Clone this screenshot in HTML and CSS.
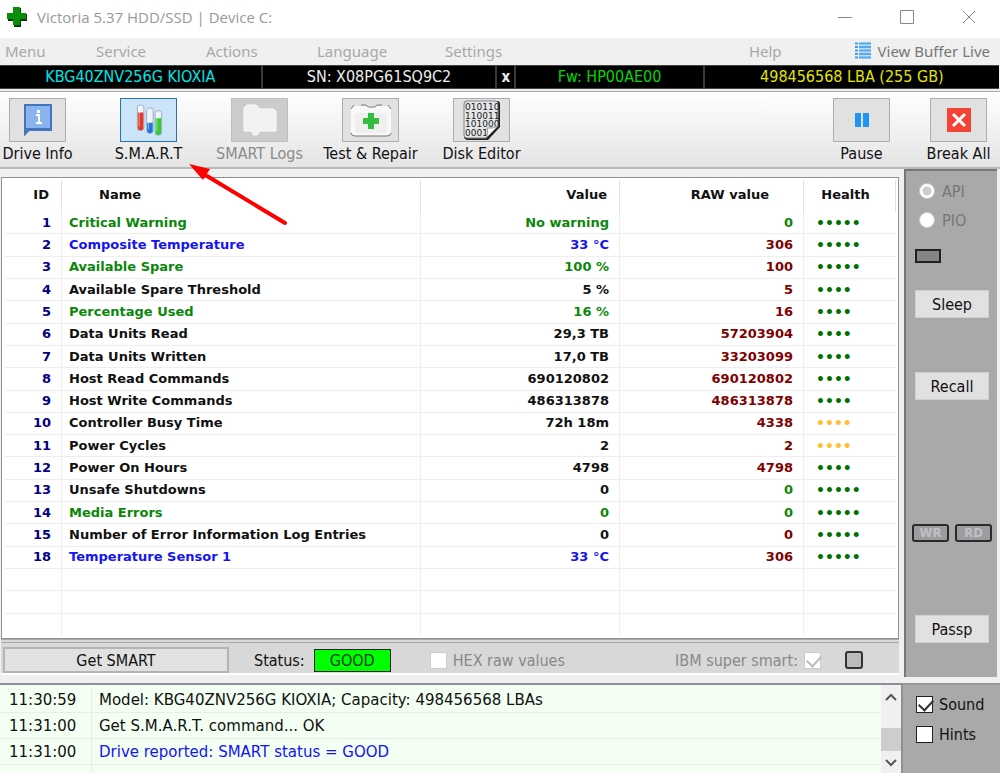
FILE: index.html
```html
<!DOCTYPE html>
<html lang="en">
<head>
  <meta charset="UTF-8">
  <meta name="viewport" content="width=device-width, initial-scale=1.0">
  <title>Victoria 5.37 HDD/SSD</title>
  <link rel="stylesheet" href="styles.css">
</head>
<body>
  <header class="titlebar">
    <svg class="app-icon" width="20" height="20" viewBox="0 0 20 20">
      <path d="M7 1h7v6h6v7h-6v6H7v-6H1V7h6z" fill="#0a3d0a"/>
      <path d="M6 0h7v6h6v6h-6v6H6v-6H0V6h6z" fill="#0b8f0b"/>
    </svg>
    <h1>Victoria 5.37 HDD/SSD | Device C:</h1>
    <div class="window-buttons">
      <button aria-label="Minimize"><svg width="14" height="14" viewBox="0 0 14 14"><path d="M0 7.5h14"/></svg></button>
      <button aria-label="Maximize"><svg width="14" height="14" viewBox="0 0 14 14"><path d="M.5 .5h13v13H.5z"/></svg></button>
      <button aria-label="Close"><svg width="14" height="14" viewBox="0 0 14 14"><path d="M1 1l12 12M13 1L1 13"/></svg></button>
    </div>
  </header>

  <nav class="menu">
    <button>Menu</button>
    <button>Service</button>
    <button>Actions</button>
    <button>Language</button>
    <button>Settings</button>
    <button>Help</button>
    <button class="buffer">
      <svg width="16" height="17" viewBox="0 0 16 17">
        <path d="M0 1.500h3M0 5h3M0 8.500h3M0 12h3M0 15.500h3M4 1.500h12M4 5h12M4 8.500h12M4 12h12M4 15.500h12" stroke="#3d9be9" stroke-width="2"/>
        <path d="M4 0h12v17H4z" fill="#7cc0f8" opacity=".4"/>
      </svg>
      View Buffer Live
    </button>
  </nav>

  <div class="drive">
    <span class="model">KBG40ZNV256G KIOXIA</span>
    <span class="serial">SN: X08PG61SQ9C2</span>
    <button class="clear">x</button>
    <span class="firmware">Fw: HP00AE00</span>
    <span class="size">498456568 LBA (255 GB)</span>
  </div>

  <div class="toolbar">
    <button class="tool">
      <span class="tool-icon">
        <svg width="28" height="32" viewBox="0 0 28 32">
          <path d="M1 1h26v25H5l-4 4z" fill="#8ab4f0" stroke="#4373b8" stroke-width="2"/>
          <path d="M2 29V25h25" fill="none" stroke="#4373b8" stroke-width="2"/>
          <path d="M12 10h4v8h2v2h-6v-2h2v-6h-2zM13 6h3v3h-3z" fill="#fff"/>
        </svg>
      </span>
      Drive Info
    </button>
    <button class="tool active">
      <span class="tool-icon">
        <svg width="28" height="32" viewBox="0 0 30 34">
          <g fill="#eef3fa" stroke="#98a9c8">
            <path d="M2.500 3v22a3.500 3.500 0 0 0 7 0V3a3.500 2 0 0 0-7 0z"/>
            <path d="M12.500 6v22a3.500 3.500 0 0 0 7 0V6a3.500 2 0 0 0-7 0z"/>
            <path d="M21.500 9v21a3.500 3.500 0 0 0 7 0V9a3.500 2 0 0 0-7 0z"/>
          </g>
          <path d="M3 9h6v16a3 3 0 0 1-6 0z" fill="#e23a28"/>
          <path d="M13 20h6v8a3 3 0 0 1-6 0z" fill="#1c78dc"/>
          <path d="M22 15h6v15a3 3 0 0 1-6 0z" fill="#35c935"/>
          <path d="M4.500 4v20M14.500 7v20M23.500 10v19" stroke="#fff" opacity=".5"/>
        </svg>
      </span>
      S.M.A.R.T
    </button>
    <button class="tool" disabled>
      <span class="tool-icon">
        <svg width="34" height="32" viewBox="0 0 34 32">
          <path d="M1 8V4l3-3h9l4 4h13l3 2v20H17l-3 4h-4l-1-4H1z" fill="#f1f1f1" stroke="#fafafa"/>
        </svg>
      </span>
      SMART Logs
    </button>
    <button class="tool">
      <span class="tool-icon">
        <svg width="42" height="36" viewBox="0 0 42 36">
          <rect x="1" y="4" width="40" height="30" rx="3" fill="#f8f8f8"/>
          <rect x="5" y="11" width="32" height="20" rx="2" fill="#efefef"/>
          <path d="M1 7l3-4M41 7l-3-4M11 3h5l2 2h7l2-2h5M1 31q0 3 4 3h32q4 0 4-3" fill="none" stroke="#777"/>
          <path d="M18 11h6v5h5v6h-5v5h-6v-5h-5v-6h5z" fill="#32bd40"/>
        </svg>
      </span>
      Test &amp; Repair
    </button>
    <button class="tool">
      <span class="tool-icon">
        <svg width="40" height="42" viewBox="0 0 40 42">
          <path d="M5 2h30q3 0 3 3v23L26 41H6q-4 0-4-4V5q0-3 3-3z" fill="#222"/>
          <path d="M5 2h28q3 0 3 3v22L24 39H5q-3 0-3-3V5q0-3 3-3z" fill="#e4e6e7" stroke="#7c858c"/>
          <g class="bits">
            <text x="3" y="11">010110</text>
            <text x="3" y="20">110011</text>
            <text x="3" y="28">101000</text>
            <text x="3" y="37">0001</text>
          </g>
          <path d="M24 39q3-6 1-10 6 1 11-2z" fill="#fff" stroke="#999"/>
        </svg>
      </span>
      Disk Editor
    </button>
    <div class="tools-right">
      <button class="tool">
        <span class="tool-icon">
          <svg width="14" height="14" viewBox="0 0 14 14"><path d="M0 0h6v14H0zM8 0h6v14H8z" fill="#1e95f4"/></svg>
        </span>
        Pause
      </button>
      <button class="tool">
        <span class="tool-icon">
          <svg width="24" height="24" viewBox="0 0 24 24">
            <path d="M0 0h24v24H0z" fill="#f44336"/>
            <path d="M6 6l12 12M18 6L6 18" stroke="#fff" stroke-width="3"/>
          </svg>
        </span>
        Break All
      </button>
    </div>
  </div>

  <main class="workspace">
    <section class="smart">
      <div class="smart-frame">
        <table>
          <colgroup>
            <col class="col-id"><col><col class="col-value"><col class="col-raw"><col class="col-health">
          </colgroup>
          <thead>
            <tr><th>ID</th><th>Name</th><th>Value</th><th>RAW value</th><th>Health</th></tr>
          </thead>
          <tbody>
            <tr class="good"><td>1</td><td>Critical Warning</td><td>No warning</td><td class="zero">0</td><td>•••••</td></tr>
            <tr class="info"><td>2</td><td>Composite Temperature</td><td>33 °C</td><td>306</td><td>•••••</td></tr>
            <tr class="good"><td>3</td><td>Available Spare</td><td>100 %</td><td>100</td><td>•••••</td></tr>
            <tr><td>4</td><td>Available Spare Threshold</td><td>5 %</td><td>5</td><td>••••</td></tr>
            <tr class="good"><td>5</td><td>Percentage Used</td><td>16 %</td><td>16</td><td>••••</td></tr>
            <tr><td>6</td><td>Data Units Read</td><td>29,3 TB</td><td>57203904</td><td>••••</td></tr>
            <tr><td>7</td><td>Data Units Written</td><td>17,0 TB</td><td>33203099</td><td>••••</td></tr>
            <tr><td>8</td><td>Host Read Commands</td><td>690120802</td><td>690120802</td><td>••••</td></tr>
            <tr><td>9</td><td>Host Write Commands</td><td>486313878</td><td>486313878</td><td>••••</td></tr>
            <tr><td>10</td><td>Controller Busy Time</td><td>72h 18m</td><td>4338</td><td class="warn">••••</td></tr>
            <tr><td>11</td><td>Power Cycles</td><td>2</td><td>2</td><td class="warn">••••</td></tr>
            <tr><td>12</td><td>Power On Hours</td><td>4798</td><td>4798</td><td>••••</td></tr>
            <tr><td>13</td><td>Unsafe Shutdowns</td><td>0</td><td class="zero">0</td><td>•••••</td></tr>
            <tr class="good"><td>14</td><td>Media Errors</td><td>0</td><td class="zero">0</td><td>•••••</td></tr>
            <tr><td>15</td><td>Number of Error Information Log Entries</td><td>0</td><td>0</td><td>•••••</td></tr>
            <tr class="info"><td>18</td><td>Temperature Sensor 1</td><td>33 °C</td><td>306</td><td>•••••</td></tr>
            <tr><td></td><td></td><td></td><td></td><td></td></tr>
            <tr><td></td><td></td><td></td><td></td><td></td></tr>
            <tr><td></td><td></td><td></td><td></td><td></td></tr>
          </tbody>
        </table>
      </div>
      <div class="statusbar">
        <button class="get-smart">Get SMART</button>
        <span class="status-label">Status:</span>
        <span class="status">GOOD</span>
        <label class="check off hex"><input type="checkbox" disabled>HEX raw values</label>
        <label class="check off ibm">IBM super smart:<input type="checkbox" checked disabled></label>
        <span class="lamp"></span>
      </div>
    </section>

    <aside class="side">
      <label class="radio"><input type="radio" name="mode" checked disabled>API</label>
      <label class="radio"><input type="radio" name="mode" disabled>PIO</label>
      <span class="led"></span>
      <button class="side-button sleep">Sleep</button>
      <button class="side-button recall">Recall</button>
      <div class="rw"><span>WR</span><span>RD</span></div>
      <button class="side-button passp">Passp</button>
    </aside>
  </main>

  <footer class="bottom">
    <div class="log">
      <ul>
        <li><time>11:30:59</time><span>Model: KBG40ZNV256G KIOXIA; Capacity: 498456568 LBAs</span></li>
        <li><time>11:31:00</time><span>Get S.M.A.R.T. command... OK</span></li>
        <li class="info"><time>11:31:00</time><span>Drive reported: SMART status = GOOD</span></li>
        <li><time></time><span></span></li>
      </ul>
      <div class="scrollbar">
        <button aria-label="Scroll up"><svg width="12" height="8" viewBox="0 0 12 8"><path d="M1 7l5-5 5 5"/></svg></button>
        <span class="thumb"></span>
        <button aria-label="Scroll down"><svg width="12" height="8" viewBox="0 0 12 8"><path d="M1 1l5 5 5-5"/></svg></button>
      </div>
    </div>
    <div class="options">
      <label class="check"><input type="checkbox" checked>Sound</label>
      <label class="check"><input type="checkbox">Hints</label>
    </div>
  </footer>

  <svg class="arrow" width="100" height="64" viewBox="0 0 100 64">
    <path d="M18 12L96 59" stroke="#f00" stroke-width="4" stroke-linecap="round"/>
    <path d="M0 0l21 5-7 11z" fill="#f00"/>
  </svg>
</body>
</html>
```

FILE: styles.css
```css
* {
  box-sizing: border-box;
}
body {
  display: flex;
  flex-direction: column;
  height: 100vh;
  margin: 0;
  overflow: hidden;
  background: #f0f0f0;
  color: #111;
  font: 16px "DejaVu Sans Condensed", "DejaVu Sans", sans-serif;
}
button {
  padding: 0;
  border: none;
  background: none;
  color: inherit;
  font: inherit;
  white-space: nowrap;
}

/* title and menu */
.titlebar {
  display: flex;
  align-items: center;
  height: 38px;
  padding: 0 24px 4px 7px;
  background: #fff;
  color: #999;
}
.titlebar h1 {
  margin: 0 auto 0 10px;
  font: 15px "Open Sans", sans-serif;
}
.window-buttons {
  display: flex;
  gap: 48px;
}
.window-buttons svg {
  display: block;
  fill: none;
  stroke: #888;
}
.menu {
  display: grid;
  grid-template-columns: 91px 110px 111px 128px 1fr auto auto;
  align-items: center;
  justify-items: start;
  height: 27px;
  padding: 0 10px 2px 5px;
  color: #a8a8a8;
  font: 15px "Noto Sans", sans-serif;
}
.menu .buffer {
  display: flex;
  align-items: center;
  gap: 7px;
  margin-left: 73px;
  color: #777;
}

/* drive line */
.drive {
  display: grid;
  grid-template-columns: 263fr 235fr 17px 188fr 297fr;
  gap: 2px;
  height: 24px;
  margin-right: 1px;
  border: solid #444;
  border-width: 1px 0;
  background: #3a3a3a;
  line-height: 22px;
  text-align: center;
}
.drive > * {
  background: #000;
}
.model {
  color: #00e5e5;
}
.serial,
.clear {
  color: #eee;
}
.clear {
  font-weight: bold;
  font-size: 15px;
}
.firmware {
  color: #00d800;
}
.size {
  color: #e5e500;
}

/* toolbar */
.toolbar {
  display: flex;
  gap: 36px;
  margin-top: 2px;
  padding: 6px 4px 0 0;
  height: 78px;
  border-top: 1px solid #aaa;
  border-bottom: 2px solid #b8b8b8;
  background: linear-gradient(#fff, #e4e4e4);
}
.tool {
  display: flex;
  flex-direction: column;
  align-items: center;
  gap: 2px;
  width: 75px;
}
.tool-icon {
  display: flex;
  align-items: center;
  justify-content: center;
  width: 57px;
  height: 44px;
  flex: none;
  border: 1px solid #adadad;
  background: #e1e1e1;
}
.tool.active .tool-icon {
  border-color: #2a73ac;
  background: #cce4f7;
}
.tool:disabled {
  color: #8a8a8a;
}
.tool:disabled .tool-icon {
  border-color: #bfbfbf;
  background: #ccc;
}
.bits {
  font: 9px "DejaVu Sans", sans-serif;
  fill: #222;
}
.tools-right {
  display: flex;
  gap: 22px;
  margin-left: auto;
}

/* table */
.workspace {
  display: flex;
  flex: 1;
  min-height: 0;
  padding-right: 3px;
}
.smart {
  display: flex;
  flex-direction: column;
  flex: 1;
  margin: 8px 5px 2px 1px;
}
.smart-frame {
  flex: 1;
  min-height: 0;
  padding: 2px;
  border: 1px solid #8c929c;
  background: #fff;
}
table {
  width: 100%;
  height: 100%;
  table-layout: fixed;
  border-collapse: separate;
  border-spacing: 0;
  font: bold 13px "DejaVu Sans", sans-serif;
}
.col-id {
  width: 58px;
}
.col-value {
  width: 199px;
}
.col-raw {
  width: 184px;
}
.col-health {
  width: 92px;
}
th {
  height: 32px;
  padding: 0 12px 4px;
  border-right: 1px solid #e2e2e2;
  text-align: right;
}
th:nth-child(2) {
  padding-left: 37px;
  text-align: left;
}
th:nth-child(4) {
  padding-right: 34px;
}
th:nth-child(5) {
  padding-right: 8px;
  padding-left: 0;
  text-align: center;
}
td {
  height: 22px;
  padding: 0 10px;
  border-right: 1px solid #eee;
  border-bottom: 1px solid #eee;
  line-height: 20px;
  text-align: right;
}
td:nth-child(1) {
  color: #000080;
}
td:nth-child(2) {
  padding-left: 7px;
  text-align: left;
}
td:nth-child(4) {
  color: #800000;
}
td:nth-child(5) {
  padding-left: 12px;
  border-right: none;
  color: #007000;
  font-size: 14px;
  text-align: left;
}
.good td:nth-child(2),
.good td:nth-child(3),
td.zero:nth-child(4) {
  color: #0a870a;
}
.info td:nth-child(2),
.info td:nth-child(3),
.log .info span {
  color: #1414f5;
}
td.warn:nth-child(5) {
  color: #ffc02e;
}
tbody tr:last-child td {
  border-bottom: none;
}

/* status line */
.statusbar {
  display: flex;
  align-items: center;
  height: 36px;
  padding: 4px 36px 0 2px;
  border-top: 4px double #aaa;
  border-bottom: 2px solid #fff;
  background: #d8d8d8;
}
.get-smart {
  width: 226px;
  height: 26px;
  border: 2px solid #b4b4b4;
  background: #e1e1e1;
}
.status-label {
  margin: 0 9px 0 25px;
}
.status {
  width: 77px;
  border: 1px solid #222;
  background: #0f0;
  color: #064006;
  line-height: 21px;
  text-align: center;
}
.check {
  display: flex;
  align-items: center;
  gap: 6px;
}
.check.off {
  color: #888;
}
.hex {
  margin-left: 39px;
}
.ibm {
  margin: 0 24px 0 auto;
}
.lamp {
  width: 18px;
  height: 18px;
  border: 2px solid #333;
  border-radius: 3px;
  background: #bbb;
}
input {
  position: relative;
  width: 17px;
  height: 17px;
  margin: 0;
  appearance: none;
  border: 1px solid #222;
  background: #fff;
}
input:disabled {
  border-color: #ccc;
}
.check input:checked::before {
  content: "";
  position: absolute;
  left: 2px;
  top: 2px;
  width: 12px;
  height: 7px;
  border: solid #333;
  border-width: 0 0 2px 2px;
  transform: rotate(-47deg);
}
.check input:disabled::before {
  border-color: #bbb;
}

/* right column */
.side {
  display: flex;
  flex-direction: column;
  width: 93px;
  padding: 10px 8px 34px 9px;
  border: solid #777;
  border-width: 2px 0 0 2px;
  background: #a9a9a9;
}
.radio {
  display: flex;
  align-items: center;
  gap: 7px;
  height: 20px;
  margin: 0 0 9px 4px;
  color: #777;
}
.radio input {
  width: 16px;
  height: 16px;
  border-radius: 50%;
}
.radio input:checked {
  background: radial-gradient(#ccc 4px, #fff 5px);
}
.led {
  width: 26px;
  height: 14px;
  margin-top: 10px;
  border: 2px solid #222;
  background: #858585;
}
.side-button {
  height: 28px;
  border: 1px solid #d0d0d0;
  background: #e1e1e1;
}
.sleep {
  margin-top: 27px;
}
.recall {
  margin-top: 54px;
}
.rw {
  display: flex;
  gap: 6px;
  margin: auto -3px 73px;
}
.rw span {
  flex: 1;
  border: 2px solid #2a2a2a;
  border-radius: 3px;
  background: #9c9ca0;
  color: #c0c0c0;
  font-size: 13px;
  font-weight: bold;
  line-height: 14px;
  text-align: center;
}

/* log */
.bottom {
  display: flex;
  height: 90px;
  margin-top: 6px;
}
.log {
  display: flex;
  flex: 1;
  border-top: 2px solid #8c929c;
  border-right: 2px solid #8c929c;
  background: #f2fff2;
  font: 15px "DejaVu Sans", sans-serif;
}
.log ul {
  flex: 1;
  margin: 0 2px 0 0;
  padding: 2px 0 0;
  overflow: hidden;
  list-style: none;
}
.log li {
  display: flex;
  height: 26px;
  border-bottom: 1px solid #e6eee6;
  line-height: 26px;
}
.log time {
  width: 92px;
  padding-left: 9px;
  border-right: 1px solid #e6eee6;
}
.log li span {
  padding-left: 7px;
}
.scrollbar {
  display: flex;
  flex-direction: column;
  width: 20px;
  background: #f0f0f0;
}
.scrollbar button {
  height: 22px;
}
.scrollbar path {
  fill: none;
  stroke: #555;
  stroke-width: 2;
}
.thumb {
  height: 23px;
  margin-top: auto;
  background: #cdcdcd;
}
.options {
  display: flex;
  flex-direction: column;
  gap: 10px;
  width: 97px;
  padding: 9px 0 0 13px;
  border-top: 2px solid #999;
  background: #a9a9a9;
}
.options .check {
  height: 20px;
}

.arrow {
  position: absolute;
  left: 189px;
  top: 164px;
}
```
